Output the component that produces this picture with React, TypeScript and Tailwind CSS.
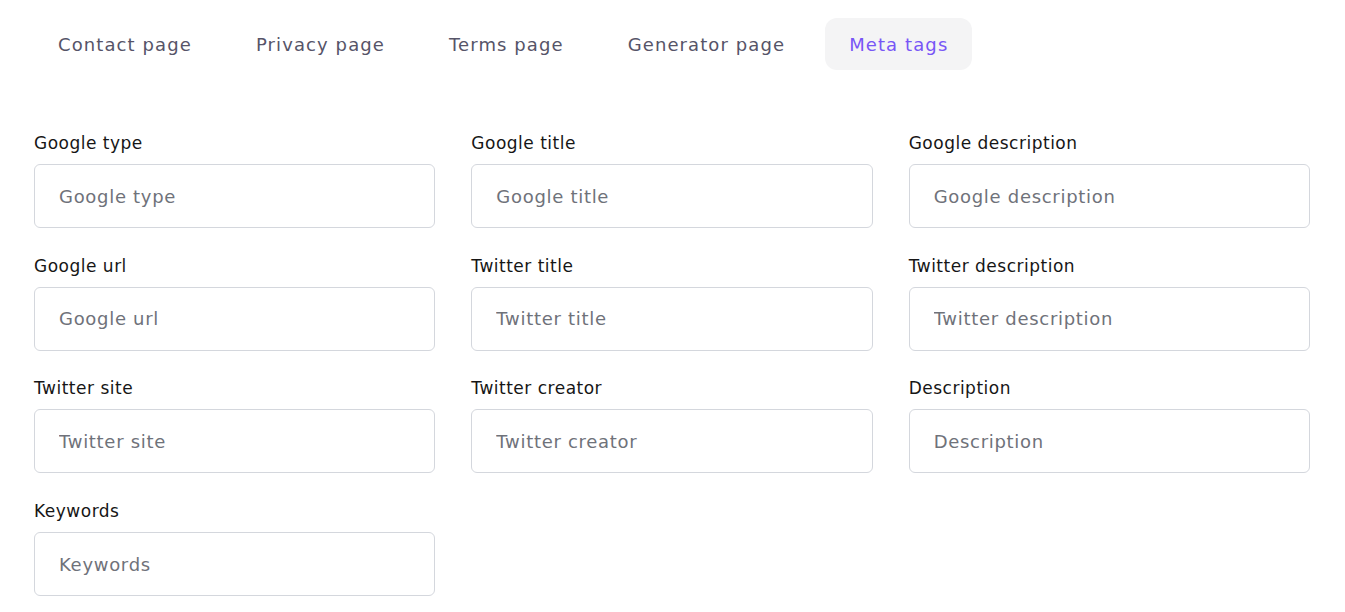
import { useState } from "react";

const tabs = ["Contact page", "Privacy page", "Terms page", "Generator page", "Meta tags"];

const fields = [
  "Google type",
  "Google title",
  "Google description",
  "Google url",
  "Twitter title",
  "Twitter description",
  "Twitter site",
  "Twitter creator",
  "Description",
  "Keywords",
];

export default function App() {
  const [active, setActive] = useState("Meta tags");

  return (
    <main className="min-h-screen bg-white px-[34px] pt-[18px] font-['DejaVu_Sans',sans-serif]">
      <nav className="flex items-center gap-4">
        {tabs.map((tab) => (
          <button
            key={tab}
            onClick={() => setActive(tab)}
            className={
              "h-[52px] rounded-xl px-6 text-[18px] tracking-[1.1px] " +
              (tab === active ? "bg-[#f4f4f5] text-[#7856f6]" : "text-[#565468]")
            }
          >
            {tab}
          </button>
        ))}
      </nav>

      <form className="mt-[61px] grid w-[1276px] grid-cols-3 gap-x-9 gap-y-[25.7px]">
        {fields.map((f) => (
          <label key={f} className="flex flex-col">
            <span className="mb-2 text-[17px] leading-[25px] tracking-[0.5px] text-[#161616]">{f}</span>
            <input
              placeholder={f}
              className="h-16 rounded-md border border-[#d4d7dd] px-6 text-[18px] tracking-[0.7px] text-gray-800 placeholder:text-[#6f727a] outline-none"
            />
          </label>
        ))}
      </form>
    </main>
  );
}
